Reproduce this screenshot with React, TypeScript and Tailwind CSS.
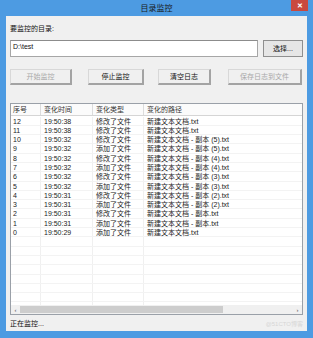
import React from "react";

const rows = [
  ["12", "19:50:38", "修改了文件", "新建文本文档.txt"],
  ["11", "19:50:38", "修改了文件", "新建文本文档.txt"],
  ["10", "19:50:32", "修改了文件", "新建文本文档 - 副本 (5).txt"],
  ["9", "19:50:32", "添加了文件", "新建文本文档 - 副本 (5).txt"],
  ["8", "19:50:32", "修改了文件", "新建文本文档 - 副本 (4).txt"],
  ["7", "19:50:32", "添加了文件", "新建文本文档 - 副本 (4).txt"],
  ["6", "19:50:32", "修改了文件", "新建文本文档 - 副本 (3).txt"],
  ["5", "19:50:32", "添加了文件", "新建文本文档 - 副本 (3).txt"],
  ["4", "19:50:31", "修改了文件", "新建文本文档 - 副本 (2).txt"],
  ["3", "19:50:31", "添加了文件", "新建文本文档 - 副本 (2).txt"],
  ["2", "19:50:31", "修改了文件", "新建文本文档 - 副本.txt"],
  ["1", "19:50:31", "添加了文件", "新建文本文档 - 副本.txt"],
  ["0", "19:50:29", "添加了文件", "新建文本文档.txt"],
];

const font = { fontFamily: '"Liberation Sans", "Noto Sans CJK SC", sans-serif' };

function Btn({ label, disabled, w }: { label: string; disabled?: boolean; w: string }) {
  return (
    <div
      className={`${w} h-[16px] flex items-center justify-center bg-[#f0f0f0] border-t border-l border-[#d8d8d8] border-r-2 border-b-2 border-r-[#a3a3a3] border-b-[#a3a3a3] text-[7px] leading-[8px] ${
        disabled ? "text-[#a8a8a8]" : "text-[#111]"
      }`}
    >
      {label}
    </div>
  );
}

function Cells({ r }: { r: string[] }) {
  return (
    <div className="flex h-[9.3px] border-b border-[#f3f3f3] text-[7px] leading-[9px] text-[#222] shrink-0">
      <div className="w-[30px] shrink-0 pl-[2px] border-r border-[#f0f0f0] whitespace-nowrap">{r[0]}</div>
      <div className="w-[52px] shrink-0 pl-[3px] border-r border-[#f0f0f0] whitespace-nowrap">{r[1]}</div>
      <div className="w-[51px] shrink-0 pl-[3px] border-r border-[#f0f0f0] whitespace-nowrap">{r[2]}</div>
      <div className="w-[260px] shrink-0 pl-[3px] whitespace-nowrap">{r[3]}</div>
    </div>
  );
}

export default function App() {
  const empties = Array.from({ length: 8 }, () => ["", "", "", ""]);
  return (
    <div className="w-[313px] h-[338px] bg-[#4d9be2] flex flex-col overflow-hidden" style={font}>
      {/* title bar */}
      <div className="relative h-[16px] shrink-0 flex items-center justify-center">
        <span className="text-[8px] leading-[9px] text-[#1a1a1a]">目录监控</span>
        <div className="absolute right-[5px] top-0 w-[17px] h-[11px] bg-[#c9493f] flex items-center justify-center">
          <span className="text-white text-[7px] leading-[8px] font-bold">✕</span>
        </div>
      </div>

      {/* client area */}
      <div className="mx-[6px] flex-1 bg-[#f0f0f0] flex flex-col px-[4px]">
        <div className="mt-[9px] h-[8px] text-[7px] leading-[8px] text-[#111]">要监控的目录:</div>

        <div className="mt-[7px] h-[17px] flex">
          <div className="w-[248px] h-full bg-white border border-[#a6a6a6] border-t-[#8c8c8c] px-[2px] pt-[2px] text-[7px] leading-[8px] text-[#111]">
            D:\test
          </div>
          <div className="ml-[5px] w-[40px] h-full bg-[#e6e6e6] border border-[#8f8f8f] flex items-center justify-center text-[7px] leading-[8px] text-[#111]">
            选择...
          </div>
        </div>

        <div className="mt-[12px] flex">
          <Btn label="开始监控" disabled w="w-[62px]" />
          <div className="ml-[16px]">
            <Btn label="停止监控" w="w-[56px]" />
          </div>
          <div className="ml-[14px]">
            <Btn label="清空日志" w="w-[53px]" />
          </div>
          <div className="ml-[17px]">
            <Btn label="保存日志到文件" disabled w="w-[74px]" />
          </div>
        </div>

        {/* list view */}
        <div className="mt-[18px] h-[212px] border border-[#9aa0a8] bg-white flex flex-col overflow-hidden">
          <div className="flex h-[12px] shrink-0 border-b border-[#d5d5d5] bg-[#fbfbfb] text-[7px] leading-[11px] text-[#333]">
            <div className="w-[30px] shrink-0 pl-[2px] border-r border-[#dcdcdc]">序号</div>
            <div className="w-[52px] shrink-0 pl-[3px] border-r border-[#dcdcdc]">变化时间</div>
            <div className="w-[51px] shrink-0 pl-[3px] border-r border-[#dcdcdc]">变化类型</div>
            <div className="w-[260px] shrink-0 pl-[3px] whitespace-nowrap">变化的路径</div>
          </div>
          <div className="flex-1 flex flex-col overflow-hidden pt-[0.5px]">
            {rows.map((r) => (
              <Cells key={r[0]} r={r} />
            ))}
            {empties.map((r, i) => (
              <Cells key={"e" + i} r={r} />
            ))}
          </div>
          {/* horizontal scrollbar */}
          <div className="h-[9px] shrink-0 bg-[#f0f0f0] flex items-center">
            <span className="w-[9px] text-center text-[6px] leading-[8px] text-[#555]">‹</span>
            <div className="w-[203px] h-[7px] bg-[#cdcdcd]" />
            <div className="flex-1" />
            <span className="w-[9px] text-center text-[6px] leading-[8px] text-[#555]">›</span>
          </div>
        </div>

        <div className="mt-[5px] h-[8px] flex justify-between text-[7px] leading-[8px]">
          <span className="text-[#111]">正在监控...</span>
          <span className="text-[#d6d6d6] text-[6px]">@51CTO博客</span>
        </div>
      </div>
      <div className="h-[7px] shrink-0" />
    </div>
  );
}
